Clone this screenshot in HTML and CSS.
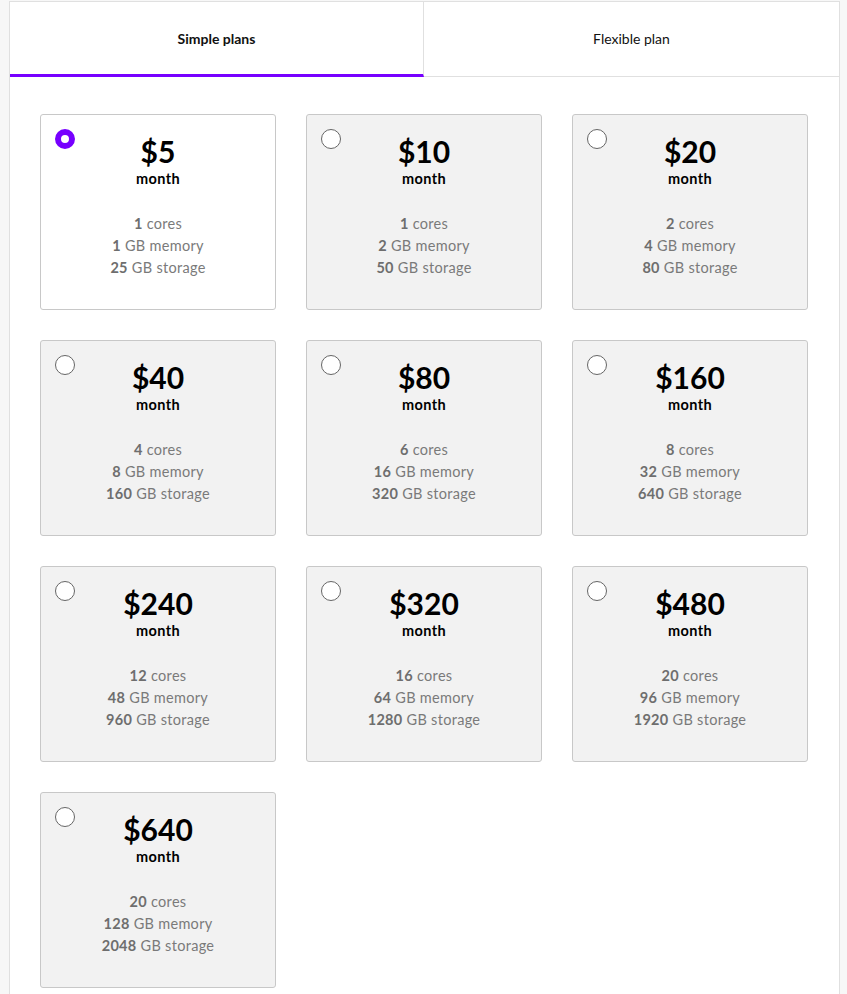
FILE: index.html
```html
<!DOCTYPE html>
<html>
<head>
<meta charset="utf-8">
<link rel="stylesheet" href="styles.css">
</head>
<body>
<div class="panel">
  <div class="tabs">
    <div class="tab tab-active">Simple plans</div>
    <div class="tab">Flexible plan</div>
  </div>
  <div class="plans">
    <div class="card card-selected">
      <span class="radio radio-on"></span>
      <div class="price">$5</div>
      <div class="period">month</div>
      <div class="specs">
        <div><b>1</b> cores</div>
        <div><b>1</b> GB memory</div>
        <div><b>25</b> GB storage</div>
      </div>
    </div>
    <div class="card">
      <span class="radio"></span>
      <div class="price">$10</div>
      <div class="period">month</div>
      <div class="specs">
        <div><b>1</b> cores</div>
        <div><b>2</b> GB memory</div>
        <div><b>50</b> GB storage</div>
      </div>
    </div>
    <div class="card">
      <span class="radio"></span>
      <div class="price">$20</div>
      <div class="period">month</div>
      <div class="specs">
        <div><b>2</b> cores</div>
        <div><b>4</b> GB memory</div>
        <div><b>80</b> GB storage</div>
      </div>
    </div>
    <div class="card">
      <span class="radio"></span>
      <div class="price">$40</div>
      <div class="period">month</div>
      <div class="specs">
        <div><b>4</b> cores</div>
        <div><b>8</b> GB memory</div>
        <div><b>160</b> GB storage</div>
      </div>
    </div>
    <div class="card">
      <span class="radio"></span>
      <div class="price">$80</div>
      <div class="period">month</div>
      <div class="specs">
        <div><b>6</b> cores</div>
        <div><b>16</b> GB memory</div>
        <div><b>320</b> GB storage</div>
      </div>
    </div>
    <div class="card">
      <span class="radio"></span>
      <div class="price">$160</div>
      <div class="period">month</div>
      <div class="specs">
        <div><b>8</b> cores</div>
        <div><b>32</b> GB memory</div>
        <div><b>640</b> GB storage</div>
      </div>
    </div>
    <div class="card">
      <span class="radio"></span>
      <div class="price">$240</div>
      <div class="period">month</div>
      <div class="specs">
        <div><b>12</b> cores</div>
        <div><b>48</b> GB memory</div>
        <div><b>960</b> GB storage</div>
      </div>
    </div>
    <div class="card">
      <span class="radio"></span>
      <div class="price">$320</div>
      <div class="period">month</div>
      <div class="specs">
        <div><b>16</b> cores</div>
        <div><b>64</b> GB memory</div>
        <div><b>1280</b> GB storage</div>
      </div>
    </div>
    <div class="card">
      <span class="radio"></span>
      <div class="price">$480</div>
      <div class="period">month</div>
      <div class="specs">
        <div><b>20</b> cores</div>
        <div><b>96</b> GB memory</div>
        <div><b>1920</b> GB storage</div>
      </div>
    </div>
    <div class="card">
      <span class="radio"></span>
      <div class="price">$640</div>
      <div class="period">month</div>
      <div class="specs">
        <div><b>20</b> cores</div>
        <div><b>128</b> GB memory</div>
        <div><b>2048</b> GB storage</div>
      </div>
    </div>
  </div>
</div>
</body>
</html>
```
FILE: styles.css
```css
html, body {
  margin: 0;
  padding: 0;
  background: #f7f7f7;
}
body {
  font-family: Lato, "Liberation Sans", sans-serif;
  color: #111;
  padding: 1px 0 0 9px;
}
.panel {
  width: 831px;
  box-sizing: border-box;
  background: #fff;
  border: 1px solid #e0e0e0;
  border-bottom: none;
  min-height: 1000px;
}
.tabs {
  display: grid;
  grid-template-columns: 414px 1fr;
}
.tab {
  height: 75px;
  box-sizing: border-box;
  display: flex;
  align-items: center;
  justify-content: center;
  font-size: 14px;
  border-bottom: 1px solid #e0e0e0;
  padding-bottom: 2px;
}
.tab-active {
  font-weight: 700;
  border-right: 1px solid #e0e0e0;
  border-bottom: 3px solid #7700ff;
  padding-top: 1px;
  padding-bottom: 0;
}
.plans {
  display: grid;
  grid-template-columns: repeat(3, 236px);
  gap: 30px;
  padding: 37px 30px;
}
.card {
  position: relative;
  height: 196px;
  box-sizing: border-box;
  border: 1px solid #c8c8c8;
  border-radius: 3px;
  background: #f2f2f2;
  text-align: center;
  padding-top: 17px;
}
.card-selected {
  background: #fff;
}
.radio {
  position: absolute;
  left: 14px;
  top: 14px;
  width: 20px;
  height: 20px;
  box-sizing: border-box;
  border: 1px solid #666;
  border-radius: 50%;
  background: #fff;
}
.radio-on {
  border: 6px solid #7700ff;
}
.price {
  font-size: 30px;
  font-weight: 700;
  line-height: 38px;
  color: #000;
}
.period {
  font-size: 14.5px;
  font-weight: 700;
  line-height: 18px;
  color: #000;
  letter-spacing: 0.4px;
}
.specs {
  margin-top: 25px;
  font-size: 14.5px;
  line-height: 22px;
  color: #7a7a7a;
  letter-spacing: 0.3px;
}
.specs b {
  font-weight: 700;
  color: #6e6e6e;
}
```
